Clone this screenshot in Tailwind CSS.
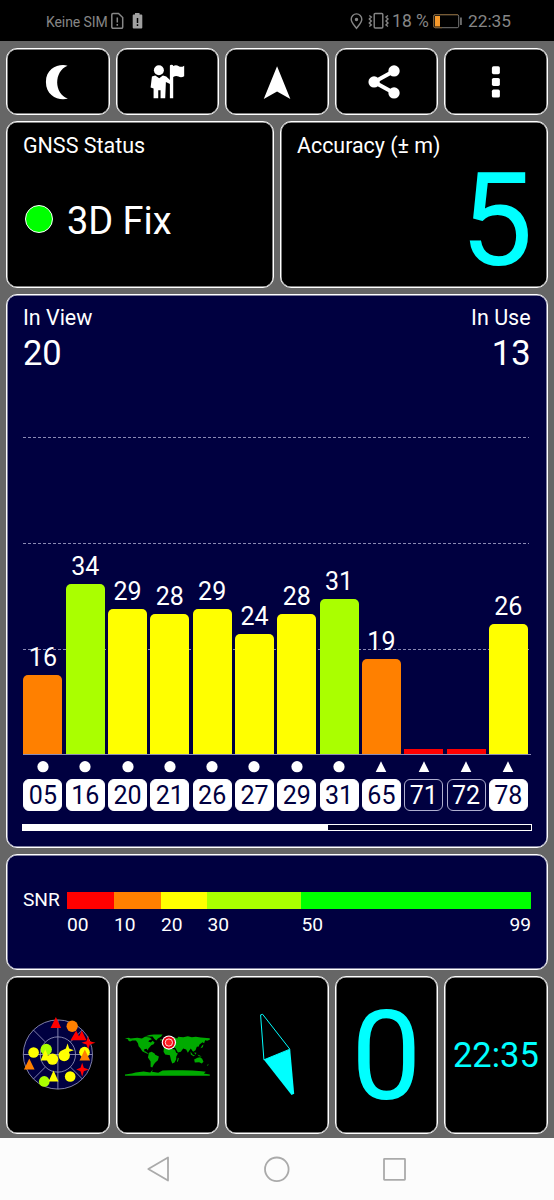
<!DOCTYPE html>
<html lang="de">
<head>
<meta charset="utf-8">
<title>GNSS Status</title>
<script src="https://cdn.jsdelivr.net/npm/@tailwindcss/browser@4"></script>
</head>
<body class="w-[554px] h-[1200px] overflow-hidden bg-[#666] text-white font-['Roboto','Liberation_Sans',sans-serif] flex flex-col">

<header class="h-[41px] shrink-0 bg-black text-[#868686] flex items-center pl-[46px] pr-[43px] pt-[2px]">
  <span class="text-[14px] leading-none whitespace-nowrap w-[61.500px] tracking-[-0.1px]">Keine SIM</span>
  <svg class="ml-[2px] mb-[1px] w-[34px] h-[20px]" viewBox="0 0 34 20" fill="none">
    <path d="M3 2.5H8.5L12.7 6.5V16a1.2 1.2 0 0 1-1.2 1.2H3A1.2 1.2 0 0 1 1.8 16V3.700A1.200 1.200 0 0 1 3 2.500Z" stroke="#868686" stroke-width="1.500"/>
    <path d="M7.300 6.500V11.500M7.300 13V14.700" stroke="#868686" stroke-width="1.500"/>
    <path d="M25 2H29.500V3.500H31.300A1 1 0 0 1 32.300 4.500V16.500A1 1 0 0 1 31.300 17.500H23.700A1 1 0 0 1 22.700 16.500V4.500A1 1 0 0 1 23.700 3.500H25Z" fill="#a0a0a0"/>
    <path d="M27.500 7V12M27.500 13.300V15" stroke="#000" stroke-width="1.500"/>
  </svg>
  <svg class="ml-auto mb-[1px] w-[40px] h-[20px]" viewBox="0 0 40 20" fill="none" stroke="#868686" stroke-width="1.400">
    <path d="M6.500 17.300C4.500 14.500 1.200 11.500 1.200 8.200A5.300 5.300 0 0 1 11.800 8.200C11.800 11.500 8.500 14.500 6.500 17.300Z"/>
    <circle cx="6.500" cy="8.500" r="1" fill="#868686"/>
    <rect x="24.200" y="2.500" width="8.600" height="14.500" rx="1"/>
    <path d="M19.300 4.500l2 1.500-2 2 2 2-2 2 2 2-2 1.500M38 4.500l-2 1.500 2 2-2 2 2 2-2 2 2 1.500"/>
  </svg>
  <span class="ml-[2px] text-[17.500px] leading-none whitespace-nowrap">18 %</span>
  <svg class="ml-[4.500px] mb-[1px] w-[30px] h-[16px]" viewBox="0 0 30 16" fill="none">
    <rect x=".7" y="1.700" width="25" height="13" rx="1.500" stroke="#777" stroke-width="1"/>
    <path d="M25 1.700H2.200A1.500 1.500 0 0 0 .7 3.200V13.200A1.500 1.500 0 0 0 2.200 14.700H9" stroke="#7d5a2c" stroke-width="1"/>
    <rect x="2" y="3" width="5" height="10.500" fill="#f79a2b"/>
    <rect x="27.200" y="4.500" width="1.500" height="7.500" fill="#868686"/>
  </svg>
  <span class="ml-[4.500px] text-[17.300px] leading-none">22:35</span>
</header>

<main class="flex-1 flex flex-col gap-[6px] px-[6.400px] pt-[6.500px] pb-[6px]">

  <nav class="h-[67.500px] shrink-0 grid grid-cols-5 gap-[6px]">
    <button class="bg-black border border-white rounded-[11px] shadow-[inset_0_0_0_0.5px_#fff]">
      <svg class="w-full h-full" viewBox="21 146 305 198"><path d="M203 196C177 189 138 203 138 245C138 288 178 303 204 295C162 280 161 213 203 196Z" fill="#fff"/></svg>
    </button>
    <button class="bg-black border border-white rounded-[11px] shadow-[inset_0_0_0_0.5px_#fff]">
      <svg class="w-full h-full" viewBox="350 146 305 198" fill="#fff">
        <circle cx="476" cy="210" r="15"/>
        <path d="M455 229L465 226L477 234L488 226L498 229L511 241V252L497 245L495 294H481V270H474V294H460V265L451 262Z"/>
        <path d="M509 196Q509 193 514 193Q519 193 519 197Q528 192 536 198Q543 202 552 196V228Q543 233 535 229Q528 225 519 230V294H509Z"/>
      </svg>
    </button>
    <button class="bg-black border border-white rounded-[11px] shadow-[inset_0_0_0_0.5px_#fff]">
      <svg class="w-full h-full" viewBox="677.500 146 305 198"><path d="M831 198L871 296L831 274L791 296Z" fill="#fff"/></svg>
    </button>
    <button class="bg-black border border-white rounded-[11px] shadow-[inset_0_0_0_0.5px_#fff]">
      <svg class="w-full h-full" viewBox="176.500 146 305 198" fill="#fff">
        <path d="M351 212L291 245L351 278" fill="none" stroke="#fff" stroke-width="12"/>
        <circle cx="351" cy="212" r="17"/><circle cx="291" cy="245" r="17"/><circle cx="351" cy="278" r="17"/>
      </svg>
    </button>
    <button class="bg-black border border-white rounded-[11px] shadow-[inset_0_0_0_0.5px_#fff]">
      <svg class="w-full h-full" viewBox="504 146 305 198" fill="#fff">
        <rect x="645" y="198" width="24" height="24" rx="5"/><rect x="645" y="233" width="24" height="24" rx="5"/><rect x="645" y="268" width="24" height="24" rx="5"/>
      </svg>
    </button>
  </nav>

  <section class="h-[167px] shrink-0 grid grid-cols-2 gap-[6px]">
    <div class="bg-black border border-white rounded-[11px] shadow-[inset_0_0_0_0.5px_#fff] pl-[15.500px] pt-[11.500px]">
      <h2 class="text-[21.5px] leading-[24px]">GNSS Status</h2>
      <div class="flex items-center mt-[41px] h-[44px]">
        <span class="w-[28px] h-[28px] mb-[3px] ml-[2px] rounded-full border border-white bg-[#0f0]"></span>
        <span class="ml-[14px] text-[38px] leading-[44px]">3D Fix</span>
      </div>
    </div>
    <div class="bg-black border border-white rounded-[11px] shadow-[inset_0_0_0_0.5px_#fff] pl-[16px] pr-[13.500px] pt-[11.500px]">
      <h2 class="text-[21.4px] leading-[24px]">Accuracy (± m)</h2>
      <div class="text-[130px] leading-[110px] mt-[8.500px] text-right text-[#0ff]">5</div>
    </div>
  </section>

  <section class="h-[553.500px] shrink-0 bg-[#000040] border border-white rounded-[11px] shadow-[inset_0_0_0_0.5px_#fff] pl-[16px] pr-[15px] pt-[10px] flex flex-col">
    <div class="flex justify-between h-[66px] pr-[1px] -ml-[.500px]">
      <div><h2 class="text-[21.5px] leading-[24px] pt-[1px]">In View</h2><p class="text-[34.500px] leading-[40px] mt-[3px]">20</p></div>
      <div class="text-right"><h2 class="text-[21.5px] leading-[24px] pt-[1px]">In Use</h2><p class="text-[34.500px] leading-[40px] mt-[3px]">13</p></div>
    </div>
    <div class="relative mt-[66px] h-[318px] shrink-0">
      <svg class="absolute inset-0 w-[508px] h-[318px]" viewBox="0 0 508 318"><path d="M0 .5H506M0 106.500H506M0 212.500H506" stroke="#8a8ab4" stroke-dasharray="3 2"/></svg>
      <div id="bars" class="relative h-full w-[504.500px] flex items-end gap-[3.300px]"></div>
      <div class="absolute left-0 bottom-0 w-[508px] h-px bg-[#8c8cb4]"></div>
    </div>
    <div id="ids" class="mt-[6px] w-[504.500px] flex gap-[3.300px]"></div>
    <div class="mt-[13px] -ml-[1px] w-[510px] h-[7px] border-[1.500px] border-white bg-[#000028] shrink-0"><div class="h-full w-[305px] bg-white"></div></div>
  </section>

  <section class="h-[116px] shrink-0 bg-[#000040] border border-white rounded-[11px] shadow-[inset_0_0_0_0.5px_#fff] pl-[15.500px] pr-[15.500px] pt-[37px] flex text-[19.200px] leading-[22px]">
    <div class="w-[44px] shrink-0 -mt-[4px] pt-[1px]">SNR</div>
    <div class="flex-1">
      <div class="h-[17px] flex mt-[.5px]">
        <i class="w-[47px] bg-[#f00]"></i><i class="w-[47px] bg-[#ff8000]"></i><i class="w-[46.500px] bg-[#ff0]"></i><i class="w-[93.500px] bg-[#af0]"></i><i class="flex-1 bg-[#0f0]"></i>
      </div>
      <div class="flex mt-[4.500px]">
        <span class="w-[47px]">00</span><span class="w-[47px]">10</span><span class="w-[46.500px]">20</span><span class="w-[94px]">30</span><span>50</span><span class="ml-auto">99</span>
      </div>
    </div>
  </section>

  <section class="h-[156px] shrink-0 grid grid-cols-5 gap-[6px]">
    <div class="bg-black border border-white rounded-[11px] shadow-[inset_0_0_0_0.5px_#fff]">
      <svg class="w-full h-full" viewBox="21 21 305 465">
        <g fill="none" stroke="#9a9ac0" stroke-width="2.500"><circle cx="174" cy="252" r="104" fill="#000040"/><circle cx="174" cy="252" r="53"/><path d="M174 148V356M70 252H278M100 178L136 214M212 290L248 326M248 178L212 214M136 290L100 326"/></g>
        <g fill="#af0"><circle cx="139" cy="237" r="17"/><circle cx="133" cy="333" r="16"/></g>
        <g fill="#f00"><path d="M168 139L184 172H152ZM229 180L243 209H212ZM246 180L260 209H232Z"/><path d="M265 196L270 212L287 217L270 222L265 238L260 222L245 217L260 212ZM247 277L252 292L267 297L252 302L247 319L242 302L229 297L242 292Z"/></g>
        <g fill="#ff0"><circle cx="101" cy="246" r="16"/><circle cx="254" cy="245" r="16"/><circle cx="211" cy="318" r="16"/><circle cx="158" cy="266" r="17"/><circle cx="193" cy="255" r="17"/><path d="M136 236L150 270H122ZM161 300L176 333H146ZM203 219L208 234L222 239L208 244L203 260L198 244L188 239L198 234Z"/></g>
        <g fill="#ff8000"><circle cx="217" cy="167" r="17"/><path d="M255 237L271 270H239ZM88 264L104 297H72Z"/></g>
      </svg>
    </div>
    <div class="bg-black border border-white rounded-[11px] shadow-[inset_0_0_0_0.5px_#fff]">
      <svg class="w-full h-full" viewBox="21 21 305 465">
        <g fill="#0a0">
          <path d="M45 204L56 202L62 204L82 202L96 204L105 199L120 201L126 206L118 209L115 213L123 216L128 211L134 216L131 221L124 224L119 230L115 235L114 240L110 235L103 236L103 242L107 243L111 246L116 249L113 250L104 246L97 242L92 234L86 227L84 218L78 210L67 210L60 213L55 210L54 206Z"/>
          <path d="M105 198L118 193L132 192L158 192L153 199L144 204L139 210L133 205L128 198L118 198ZM150 207L156 206V210H151Z"/>
          <path d="M117 247L125 244L134 249L136 253L147 258L144 269L137 275L132 281L127 291L122 289L122 273L114 261Z"/>
          <path d="M162 232L175 230L180 234L195 237L199 247L204 249L199 259L199 266L194 276L187 279L183 268L180 254L166 252L161 244ZM204 262L207 263L204 274L201 273Z"/>
          <path d="M162 229L164 220L174 214L180 204L191 200L202 204L205 199L220 200L234 197L246 200L258 199L273 201L300 203V208L292 211L286 209L283 218L278 215L269 222L267 228L261 229L257 239L250 244L247 240L243 234L238 241L234 247L229 237L220 234L213 244L204 246L197 233L188 229L180 222L173 228Z"/>
          <path d="M253 267L263 262L271 260L277 265L281 274L276 279L268 275L255 276ZM242 243L249 253L256 256L251 257L243 252ZM253 246L260 247L257 253ZM263 252L276 258L267 257ZM277 225L281 222L279 230L272 233ZM291 285L296 280L295 285Z"/>
          <path d="M45 312L66 309L77 306L101 303L121 306L129 297L126 304L145 307L158 300L182 299L218 299L248 300L276 302L288 304L282 309L300 312V316H45Z"/>
        </g>
        <circle cx="177" cy="216" r="21.500" fill="#fff"/><circle cx="177" cy="216" r="18" fill="#e80010"/><circle cx="177" cy="216" r="11" fill="#f22" stroke="#fff" stroke-width="2.500"/>
      </svg>
    </div>
    <div class="bg-black border border-white rounded-[11px] shadow-[inset_0_0_0_0.5px_#fff]">
      <svg class="w-full h-full" viewBox="18 21 305 465">
        <path d="M122 133L128 131L210 236L132 268Z" fill="none" stroke="#0ff" stroke-width="3"/><path d="M132 268L211 236L223 370L215 374Z" fill="#0ff"/>
      </svg>
    </div>
    <div class="bg-black border border-white rounded-[11px] shadow-[inset_0_0_0_0.5px_#fff] flex items-center justify-center text-[#0ff] text-[125px] leading-[152px] pt-[4px]">0</div>
    <div class="bg-black border border-white rounded-[11px] shadow-[inset_0_0_0_0.5px_#fff] flex items-center justify-center text-[#0ff] text-[34.500px] leading-none pt-[1px]">22:35</div>
  </section>
</main>

<footer class="h-[62px] shrink-0 bg-[#fcfcfc]">
  <svg class="w-[554px] h-[62px]" viewBox="0 0 554 62" fill="none" stroke="#aaa" stroke-width="1.800" stroke-linejoin="round">
    <path d="M168 19.500V42.500L148.300 31Z"/><circle cx="276.800" cy="31.300" r="11.800"/><rect x="384" y="20.800" width="21" height="21" rx=".5"/>
  </svg>
</footer>

<script>
const sats = [["05",16,"#ff8000"],["16",34,"#af0"],["20",29,"#ff0"],["21",28,"#ff0"],["26",29,"#ff0"],["27",24,"#ff0"],["29",28,"#ff0"],["31",31,"#af0"],["65",19,"#ff8000"],["71",0,"#f00"],["72",0,"#f00"],["78",26,"#ff0"]];
document.getElementById("bars").innerHTML = sats.map(([id, v, c]) => `
  <div class="flex-1 flex flex-col items-center">
    ${v ? `<span class="text-[25px] leading-[30px] mb-[2px]">${v}</span>` : ""}
    <div class="${v ? "w-full rounded-t-[5px]" : "w-full"}" style="height:${v ? v * 5.03 : 6}px;background:${c}"></div>
  </div>`).join("");
document.getElementById("ids").innerHTML = sats.map(([id, v], i) => `
  <div class="flex-1 flex flex-col items-center">
    <svg class="w-[12px] h-[12px]" viewBox="0 0 12 12" fill="#fff">${i < 8 ? '<circle cx="6" cy="5.700" r="5.600"/>' : '<path d="M6 .3L11.300 11H.7Z"/>'}</svg>
    <span class="${v ? "mt-[6px] w-full h-[32px] rounded-[6px] bg-white text-[#000040] text-center text-[25px] leading-[31px] border border-white" : "mt-[6px] w-full h-[32px] rounded-[6px] text-center text-[25px] leading-[31px] border border-[#b0b0d0]"}">${id}</span>
  </div>`).join("");
</script>
</body>
</html>
